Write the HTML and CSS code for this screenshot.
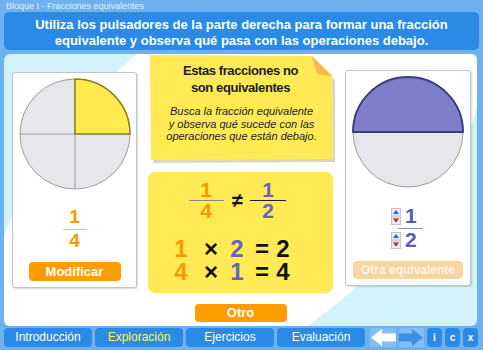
FILE: index.html
```html
<!DOCTYPE html>
<html lang="es">
<head>
<meta charset="utf-8">
<title>Fracciones equivalentes</title>
<link rel="stylesheet" href="styles.css">
</head>
<body>
<div class="topbar">Bloque I - Fracciones equivalentes</div>
<div class="header">Utiliza los pulsadores de la parte derecha para formar una fracción<br>equivalente y observa qué pasa con las operaciones debajo.</div>
<div class="main">
  <div class="card left">
    <svg class="pie" width="112" height="112" viewBox="0 0 112 112">
      <circle cx="56" cy="56" r="55" fill="#e7e6eb" stroke="#9c9c9c" stroke-width="1"/>
      <line x1="1" y1="56" x2="111" y2="56" stroke="#9c9c9c" stroke-width="1"/>
      <line x1="56" y1="1" x2="56" y2="111" stroke="#9c9c9c" stroke-width="1"/>
      <path d="M56,56 L56,1 A55,55 0 0 1 111,56 Z" fill="#ffeb50" stroke="#8a7c22" stroke-width="1.5" stroke-linejoin="round"/>
    </svg>
    <div class="frac orange">
      <span class="num">1</span>
      <span class="bar lbar"></span>
      <span class="den">4</span>
    </div>
    <div class="btn modificar">Modificar</div>
  </div>

  <div class="center">
    <div class="note">
      <svg class="note-bg" width="185" height="106" viewBox="0 0 185 106">
        <polygon points="4,3 166,4 187,25 187,107 5,108" fill="#b9b59a" opacity="0.55"/>
        <polygon points="2,0 164,1 184,21 185,104 3,105" fill="#ffea55"/>
        <polygon points="164,1 184,21 169,19" fill="#ffb54a"/>
      </svg>
      <div class="note-title">Estas fracciones no<br>son equivalentes</div>
      <div class="note-text">Busca la fracción equivalente<br>y observa qué sucede con las<br>operaciones que están debajo.</div>
    </div>

    <div class="ops">
      <div class="fracrow">
        <div class="frac big orange">
          <span class="num">1</span>
          <span class="bar gbar"></span>
          <span class="den">4</span>
        </div>
        <span class="neq">≠</span>
        <div class="frac big blue">
          <span class="num">1</span>
          <span class="bar dbar"></span>
          <span class="den">2</span>
        </div>
      </div>
      <div class="eq">
        <span class="orange">1</span><span class="op">×</span><span class="blue">2</span><span class="op">=</span><span class="op">2</span>
      </div>
      <div class="eq second">
        <span class="orange">4</span><span class="op">×</span><span class="blue">1</span><span class="op">=</span><span class="op">4</span>
      </div>
    </div>

    <div class="btn otro">Otro</div>
  </div>

  <div class="card right">
    <svg class="pie" width="112" height="112" viewBox="0 0 112 112">
      <circle cx="56" cy="56" r="55" fill="#e7e6eb" stroke="#9c9c9c" stroke-width="1"/>
      <path d="M1,56 A55,55 0 0 1 111,56 Z" fill="#7f7fc9" stroke="#3d3d78" stroke-width="2" stroke-linejoin="round"/>
    </svg>
    <div class="rfrac">
      <div class="rrow">
        <svg class="spin" width="10" height="17" viewBox="0 0 10 17">
          <rect x="0.5" y="0.5" width="9" height="7.5" fill="#ececf0" stroke="#c4c4c8"/>
          <rect x="0.5" y="9" width="9" height="7.5" fill="#ececf0" stroke="#c4c4c8"/>
          <polygon points="5,2 8,6 2,6" fill="#2b5fd9"/>
          <polygon points="2,10.5 8,10.5 5,14.5" fill="#d41a1a"/>
        </svg>
        <span class="rdig">1</span>
      </div>
      <span class="bar rbar"></span>
      <div class="rrow">
        <svg class="spin" width="10" height="17" viewBox="0 0 10 17">
          <rect x="0.5" y="0.5" width="9" height="7.5" fill="#ececf0" stroke="#c4c4c8"/>
          <rect x="0.5" y="9" width="9" height="7.5" fill="#ececf0" stroke="#c4c4c8"/>
          <polygon points="5,2 8,6 2,6" fill="#2b5fd9"/>
          <polygon points="2,10.5 8,10.5 5,14.5" fill="#d41a1a"/>
        </svg>
        <span class="rdig">2</span>
      </div>
    </div>
    <div class="btn otra">Otra equivalente</div>
  </div>
</div>

<nav class="nav">
  <div class="tab">Introducción</div>
  <div class="tab active">Exploración</div>
  <div class="tab">Ejercicios</div>
  <div class="tab">Evaluación</div>
  <div class="arrow first">
    <svg width="26" height="19" viewBox="0 0 26 19"><polygon points="1,9.5 12,1 12,5.5 26,5.5 26,13.5 12,13.5 12,18" fill="#ffffff"/></svg>
  </div>
  <div class="arrow">
    <svg width="25" height="19" viewBox="0 0 25 19"><polygon points="0,5.5 13,5.5 13,1 24,9.5 13,18 13,13.5 0,13.5" fill="#3a8fe8"/></svg>
  </div>
  <div class="sbtn">i</div>
  <div class="sbtn">c</div>
  <div class="sbtn">x</div>
</nav>
</body>
</html>
```
FILE: styles.css
```css
* { box-sizing: border-box; }
html, body { margin: 0; padding: 0; }
body {
  width: 483px;
  height: 350px;
  overflow: hidden;
  background: #6db1f0;
  font-family: "Liberation Sans", Arial, sans-serif;
}
.topbar {
  height: 12px;
  padding-left: 6px;
  font-size: 9px;
  line-height: 12px;
  color: #e4f2ff;
}
.header {
  margin: 0 4px;
  height: 38px;
  padding-top: 5px;
  background: #2a8ae6;
  border-radius: 5px;
  color: #fff;
  font-weight: bold;
  font-size: 13px;
  line-height: 16px;
  text-align: center;
}
.main {
  position: relative;
  overflow: hidden;
  margin: 4px 6px 0 4px;
  height: 272px;
  background: #d3f3fc;
  border-radius: 6px;
  display: flex;
  align-items: flex-start;
  padding-left: 8px;
}
.main::before {
  content: "";
  position: absolute;
  left: -55px;
  top: -37px;
  width: 580px;
  height: 320px;
  border-radius: 50%;
  background: #ffffff;
  transform: rotate(-40deg);
}
.card {
  position: relative;
  background: #fff;
  border: 1px solid #bcc4cc;
  border-radius: 3px;
  box-shadow: 1px 1px 2px rgba(0, 0, 0, 0.15);
  display: flex;
  flex-direction: column;
  align-items: center;
  height: 216px;
  padding-top: 5px;
}
.card.left { margin-top: 18px; width: 125px; }
.card.right { margin-top: 16px; margin-left: 12px; width: 126px; }
.pie { display: block; }

.frac {
  display: flex;
  flex-direction: column;
  align-items: center;
  font-weight: bold;
  font-size: 19px;
  line-height: 20px;
}
.card.left .frac { margin-top: 17px; }
.bar { display: block; height: 1px; }
.lbar { width: 24px; margin: 2px 0 1px; background: #f9c46a; }
.orange { color: #f59a00; }
.blue { color: #6464bf; }

.btn {
  border-radius: 4px;
  color: #fff;
  font-weight: bold;
  font-size: 13px;
  text-align: center;
}
.modificar {
  margin-top: 11px;
  width: 92px;
  height: 19px;
  line-height: 19px;
  background: #ff9c00;
}

.center {
  position: relative;
  margin-left: 11px;
  margin-top: 1px;
  width: 185px;
  display: flex;
  flex-direction: column;
  align-items: center;
}
.note {
  position: relative;
  isolation: isolate;
  width: 185px;
  height: 106px;
  padding-top: 7px;
  text-align: center;
  color: #1c1c28;
}
.note-bg {
  position: absolute;
  left: 0;
  top: 0;
  z-index: -1;
  overflow: visible;
}
.note-title {
  font-weight: bold;
  font-size: 13px;
  letter-spacing: -0.4px;
  line-height: 17px;
}
.note-text {
  margin-top: 9px;
  font-style: italic;
  font-size: 11px;
  line-height: 12.5px;
  padding-left: 2px;
}
.ops {
  margin-top: 11px;
  width: 185px;
  height: 121px;
  background: #ffea55;
  border-radius: 7px;
  padding-top: 8px;
}
.fracrow {
  display: flex;
  align-items: center;
  padding-left: 40px;
}
.frac.big { font-size: 21px; width: 36px; }
.gbar { width: 35px; background: #8c8c8c; }
.dbar { width: 36px; background: #1e1e3c; }
.neq {
  margin: 0 7px 0 8px;
  font-weight: bold;
  font-size: 20px;
  color: #111;
}
.eq {
  margin-top: 16px;
  padding-left: 12px;
  display: grid;
  grid-template-columns: 42px 18px 34px 16px 26px;
  justify-items: center;
  font-weight: bold;
  font-size: 24px;
  line-height: 23px;
  height: 23px;
}
.eq.second { margin-top: 0; }
.op { color: #111; }
.otro {
  margin-top: 11px;
  width: 92px;
  height: 18px;
  line-height: 18px;
  background: #ff9c00;
}

.rfrac {
  margin-top: 18px;
  width: 34px;
  display: flex;
  flex-direction: column;
  color: #5a5ab4;
  font-weight: bold;
  font-size: 21px;
}
.rrow {
  display: flex;
  align-items: center;
  gap: 4px;
  height: 20px;
  line-height: 20px;
}
.rbar { width: 25px; margin: 2px 0 1px 7px; background: #8f8fcf; }
.spin { display: block; }
.otra {
  margin-top: 11px;
  width: 110px;
  height: 18px;
  line-height: 18px;
  font-size: 12px;
  background: #f8d4a0;
  color: #fdf4e8;
}

.nav {
  display: flex;
  margin: 2px 0 0 4px;
  gap: 3px;
  height: 19px;
}
.tab {
  width: 88px;
  height: 19px;
  background: #2a8ae6;
  border-radius: 4px;
  color: #fff;
  font-size: 12px;
  line-height: 19px;
  text-align: center;
}
.tab.active { color: #fff25a; }
.arrow {
  height: 19px;
  background: #82bdf3;
}
.arrow svg { display: block; }
.arrow.first { margin-left: 2px; }
.sbtn {
  width: 15px;
  height: 19px;
  background: #2a8ae6;
  border-radius: 4px;
  color: #fff;
  font-weight: bold;
  font-size: 10px;
  line-height: 19px;
  text-align: center;
}
```
